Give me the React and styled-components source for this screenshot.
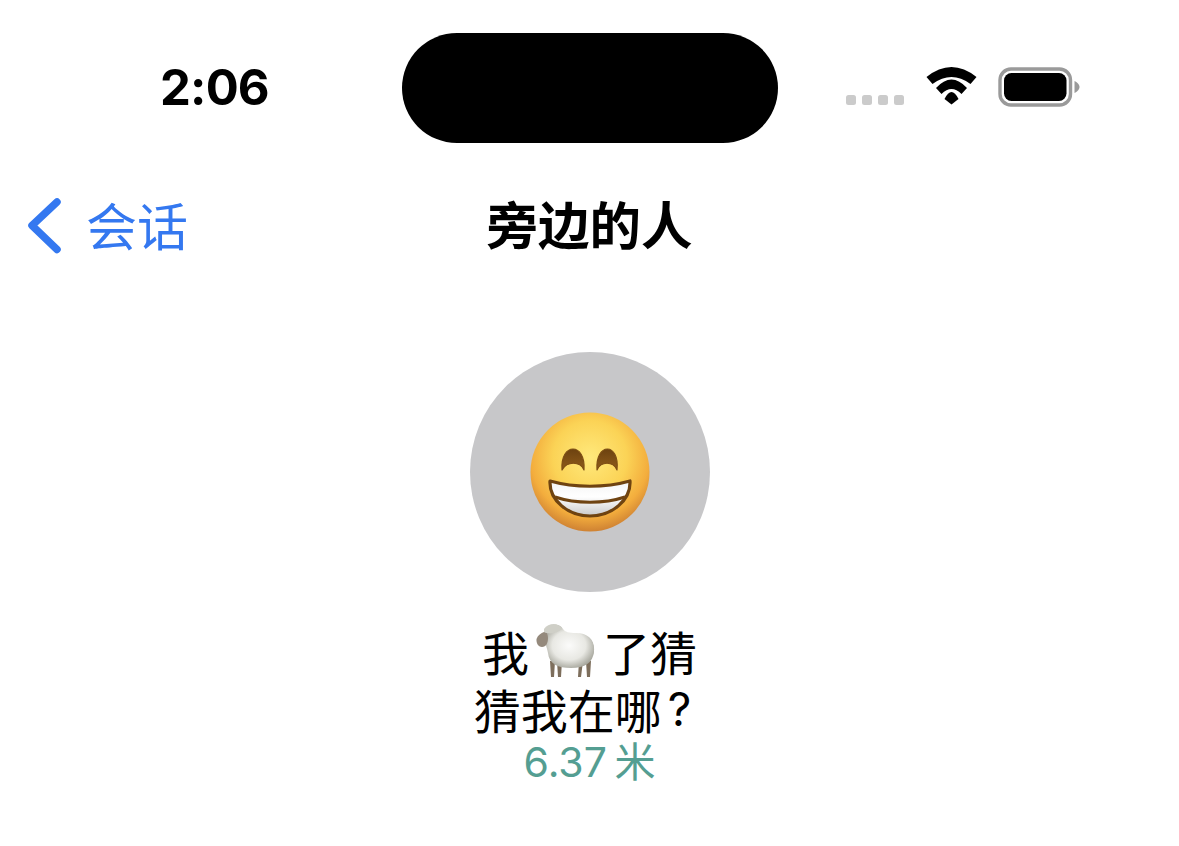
import React from "react";
import styled, { createGlobalStyle } from "styled-components";

const GlobalStyle = createGlobalStyle`
  html, body {
    margin: 0;
    padding: 0;
    background: #fff;
  }
  body {
    font-family: "Inter", "Noto Sans CJK SC", sans-serif;
  }
`;

const Page = styled.div`
  width: 1179px;
  height: 846px;
  overflow: hidden;
  display: flex;
  flex-direction: column;
  background: #fff;
`;

const StatusBar = styled.div`
  display: grid;
  grid-template-columns: 402px 376px 1fr;
  height: 110px;
  padding-top: 33px;
`;

const Time = styled.div`
  display: flex;
  align-items: center;
  padding-left: 160px;
  padding-bottom: 2px;
  font-family: "Inter", sans-serif;
  font-size: 49px;
  font-weight: 700;
  letter-spacing: -0.8px;
  color: #000;
`;

const Island = styled.div`
  background: #000;
  border-radius: 55px;
`;

const StatusIcons = styled.div`
  display: flex;
  align-items: flex-start;
  padding: 34px 0 0 68px;
`;

const SignalDots = styled.div`
  display: flex;
  gap: 6px;
  margin-top: 28px;
  margin-right: 22px;
`;

const Dot = styled.span`
  width: 10px;
  height: 10px;
  border-radius: 2.5px;
  background: #cbcbcb;
`;

const Nav = styled.div`
  display: grid;
  grid-template-columns: 1fr auto 1fr;
  align-items: center;
  height: 72px;
  margin-top: 47px;
`;

const Back = styled.div`
  display: flex;
  align-items: center;
  gap: 23px;
  padding-left: 27px;
  color: #3478f0;
  font-family: "Noto Sans CJK SC", sans-serif;
  font-size: 51px;
  line-height: 60px;
`;

const BackLabel = styled.span`
  margin-top: -5px;
`;

const Title = styled.div`
  margin-top: -7px;
  font-family: "Noto Sans CJK SC", sans-serif;
  font-size: 51.5px;
  line-height: 60px;
  font-weight: 700;
  color: #000;
`;

const Body = styled.div`
  display: flex;
  flex-direction: column;
  align-items: center;
  padding-top: 90px;
`;

const Avatar = styled.div`
  width: 240px;
  height: 240px;
  border-radius: 50%;
  background: #c7c7c9;
  display: flex;
  align-items: center;
  justify-content: center;
`;

const Name = styled.div`
  margin-top: 30px;
  font-family: "Noto Sans CJK SC", sans-serif;
  font-size: 47px;
  line-height: 58px;
  color: #000;
  text-align: center;
`;

const NameLine = styled.div`
  display: flex;
  align-items: center;
  justify-content: center;
  height: 58px;
`;

const SheepWrap = styled.span`
  display: inline-flex;
  margin: 0 7px 0 7px;
`;

const Question = styled.span`
  font-family: "Inter", sans-serif;
  font-size: 46px;
  margin-left: 6px;
  margin-right: 14px;
`;

const Distance = styled.div`
  margin-top: -2px;
  font-family: "Inter", "Noto Sans CJK SC", sans-serif;
  font-size: 41px;
  line-height: 52px;
  word-spacing: -4px;
  color: #549e92;
`;

const Wifi = () => (
  <svg width="51" height="38" viewBox="0 0 50 38">
    <path d="M0 10 Q25 -10 50 10 L44 17 Q25 3 6 17 Z" fill="#000" />
    <path d="M9.5 21 Q25 4 40.5 21 L35 27 Q25 17 15 27 Z" fill="#000" />
    <path d="M18 32 Q25 18 32 32 L25 37.5 Z" fill="#000" />
  </svg>
);

const Battery = () => (
  <svg width="84" height="42" viewBox="0 0 84 42" style={{ marginLeft: 21, marginTop: 0 }}>
    <rect x="2" y="2" width="70.5" height="36" rx="11" fill="none" stroke="#9a9a9a" strokeWidth="3.4" />
    <rect x="6" y="6" width="62.5" height="28" rx="7.5" fill="#000" />
    <path d="M76.5 14 C79 15 81.5 17.5 81.5 20 C81.5 22.5 79 25 76.5 26 Z" fill="#9a9a9a" />
  </svg>
);

const Chevron = () => (
  <svg width="36" height="60" viewBox="0 0 36 60">
    <path d="M30 6 L5 29.5 L30 53.5" fill="none" stroke="#3478f0" strokeWidth="7.5" strokeLinecap="round" strokeLinejoin="round" />
  </svg>
);

const GrinFace = () => (
  <svg width="120" height="120" viewBox="0 0 120 120">
    <defs>
      <radialGradient id="face" cx="50%" cy="38%" r="62%">
        <stop offset="0%" stopColor="#ffe97c" />
        <stop offset="50%" stopColor="#fbd356" />
        <stop offset="80%" stopColor="#f3ad3d" />
        <stop offset="100%" stopColor="#cf8233" />
      </radialGradient>
      <linearGradient id="teethTop" x1="0" y1="0" x2="0" y2="1">
        <stop offset="0%" stopColor="#f4f4f4" />
        <stop offset="45%" stopColor="#ffffff" />
        <stop offset="100%" stopColor="#c9c9c9" />
      </linearGradient>
      <linearGradient id="eye" x1="0" y1="0" x2="0" y2="1">
        <stop offset="0%" stopColor="#6d4210" />
        <stop offset="100%" stopColor="#8f5c1a" />
      </linearGradient>
    </defs>
    <circle cx="60" cy="60" r="59.5" fill="url(#face)" />
    <path d="M32 58 C30 30 56 30 54 58 C50 49 37 49 32 58 Z" fill="url(#eye)" stroke="#7d4e14" strokeWidth="1.2" strokeLinejoin="round" />
    <path d="M67 58 C65 30 90 30 87 58 C83 49 71 49 67 58 Z" fill="url(#eye)" stroke="#7d4e14" strokeWidth="1.2" strokeLinejoin="round" />
    <path d="M20 69 C45 76 75 76 100 69 C101 88 82 104 60 104 C38 104 19 88 20 69 Z" fill="url(#teethTop)" stroke="#6f4310" strokeWidth="3.2" strokeLinejoin="round" />
    <path d="M25 85 C46 92 74 92 95 85" fill="none" stroke="#6f4310" strokeWidth="3.2" />
  </svg>
);

const Sheep = () => (
  <svg width="60" height="56" viewBox="0 0 60 56">
    <defs>
      <radialGradient id="wool" cx="50%" cy="48%" r="56%">
        <stop offset="0%" stopColor="#fbfbfa" />
        <stop offset="60%" stopColor="#e8e8e3" />
        <stop offset="100%" stopColor="#a3a399" />
      </radialGradient>
    </defs>
    <path d="M14 38 L15 54 L18 54 L19 38 Z M21 38 L22 54 L25 54 L26 38 Z M43 38 L42 54 L45 54 L47 38 Z M50 38 L51 54 L54 54 L55 38 Z" fill="#7d6e5c" />
    <path d="M54 16 C58 20 59 28 57 32 C55 28 54 22 52 18 Z" fill="#a8a89e" />
    <path d="M8 10 C11 1 23 -1 27 6 C29 9 33 10 40 10 C52 10 59 17 58 28 C57 40 49 45 35 45 C22 45 13 41 12 30 C11 24 8 18 8 10 Z" fill="url(#wool)" />
    <path d="M0.5 16 C2 12 5 10 8 9 C10 8 12 11 12 15 C12 20 10 24 6 24 C3 24 0 21 0.5 16 Z" fill="#94897c" />
    <path d="M8 6 C12 0 23 -1 26 6 C22 10 13 12 8 9 Z" fill="#cfcfc7" />
  </svg>
);

export default function App() {
  return (
    <Page>
      <GlobalStyle />
      <StatusBar>
        <Time>2:06</Time>
        <Island />
        <StatusIcons>
          <SignalDots>
            <Dot />
            <Dot />
            <Dot />
            <Dot />
          </SignalDots>
          <Wifi />
          <Battery />
        </StatusIcons>
      </StatusBar>
      <Nav>
        <Back>
          <Chevron />
          <BackLabel>会话</BackLabel>
        </Back>
        <Title>旁边的人</Title>
        <span />
      </Nav>
      <Body>
        <Avatar>
          <GrinFace />
        </Avatar>
        <Name>
          <NameLine>
            我
            <SheepWrap>
              <Sheep />
            </SheepWrap>
            了猜
          </NameLine>
          <NameLine>
            猜我在哪<Question>?</Question>
          </NameLine>
        </Name>
        <Distance>6.37 米</Distance>
      </Body>
    </Page>
  );
}
